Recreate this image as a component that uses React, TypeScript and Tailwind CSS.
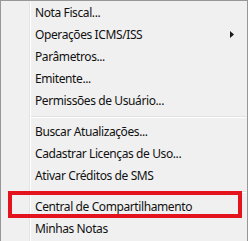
type Entry = { label: string; submenu?: boolean } | "sep";

const entries: Entry[] = [
  { label: "Nota Fiscal..." },
  { label: "Operações ICMS/ISS", submenu: true },
  { label: "Parâmetros..." },
  { label: "Emitente..." },
  { label: "Permissões de Usuário..." },
  "sep",
  { label: "Buscar Atualizações..." },
  { label: "Cadastrar Licenças de Uso..." },
  { label: "Ativar Créditos de SMS" },
  "sep",
  { label: "Central de Compartilhamento" },
  { label: "Minhas Notas" },
];

function Separator() {
  return (
    <div className="h-[9px] flex flex-col justify-center pl-[29px]">
      <div className="h-px bg-[#e0e0e0]" />
      <div className="h-px bg-white" />
    </div>
  );
}

function MenuItem({ label, submenu }: { label: string; submenu?: boolean }) {
  return (
    <div className="h-[22px] flex items-center pl-[33px] pr-[11px] pb-px">
      <span className="flex-1 whitespace-nowrap">{label}</span>
      {submenu && (
        <svg width="4" height="7" viewBox="0 0 4 7" className="mr-[1px]">
          <path d="M0 0 L4 3.5 L0 7 Z" fill="#1a1a1a" />
        </svg>
      )}
    </div>
  );
}

export default function App() {
  return (
    <div className="w-[248px] h-[241px] overflow-hidden bg-white">
      <div className="relative w-[248px] h-[260px] border border-[#979797] bg-[#f0f0f0] p-px text-[12px] tracking-[-0.4px] text-[#111] font-['Segoe_UI','Noto_Sans',sans-serif] leading-none">
        {/* gutter */}
        <div className="absolute top-px bottom-px left-[28px] w-[2px] flex">
          <div className="w-px bg-[#e2e3e3]" />
          <div className="w-px bg-white" />
        </div>
        <div className="relative">
          {entries.map((e, i) =>
            e === "sep" ? (
              <Separator key={i} />
            ) : (
              <MenuItem key={i} label={e.label} submenu={e.submenu} />
            )
          )}
        </div>
        {/* red highlight box */}
        <div className="absolute left-[7px] top-[190px] w-[234px] h-[27px] border-4 border-[#e3141e]" />
      </div>
    </div>
  );
}
